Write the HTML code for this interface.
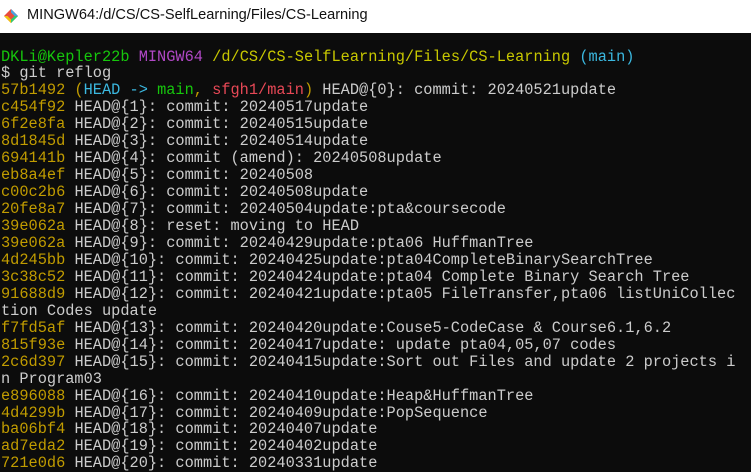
<!DOCTYPE html><html><head><style>
body{margin:0;width:751px;height:467px;overflow:hidden;background:#0c0c0c;}
.t{position:absolute;left:0;top:0;width:751px;height:33px;background:#fff;}
.t span{position:absolute;left:27px;top:7px;font:14.6px "Liberation Sans",sans-serif;color:#111;}
pre{position:absolute;left:1px;top:48.5px;margin:0;font:15.3px/16.95px "Liberation Mono",monospace;color:#cccccc;}
.g{color:#16c60c}.p{color:#b148c6}.y{color:#c19c00}.c{color:#3bb8e0}.r{color:#e74856}.yy{color:#c8c800}
</style></head><body>
<div class="t"><svg style="position:absolute;left:3px;top:8px" width="16" height="16" viewBox="0 0 16 16"><path d="M8 1L15 8L8 15L1 8Z" fill="#e84c3d"/><path d="M8 1L15 8L11.5 8L8 4.5Z" fill="#4aa3df"/><path d="M1 8L4.5 8L8 11.5L8 15Z" fill="#f1c40f"/><path d="M15 8L8 15L8 11.5L11.5 8Z" fill="#2ecc71"/></svg><span>MINGW64:/d/CS/CS-SelfLearning/Files/CS-Learning</span></div>
<pre><span class="g">DKLi@Kepler22b</span> <span class="p">MINGW64</span> <span class="yy">/d/CS/CS-SelfLearning/Files/CS-Learning</span> <span class="c">(main)</span>
$ git reflog
<span class="y">57b1492 (</span><span class="c">HEAD -&gt; </span><span class="g">main</span><span class="y">, </span><span class="r">sfgh1/main</span><span class="y">)</span> HEAD@{0}: commit: 20240521update
<span class="y">c454f92</span> HEAD@{1}: commit: 20240517update
<span class="y">6f2e8fa</span> HEAD@{2}: commit: 20240515update
<span class="y">8d1845d</span> HEAD@{3}: commit: 20240514update
<span class="y">694141b</span> HEAD@{4}: commit (amend): 20240508update
<span class="y">eb8a4ef</span> HEAD@{5}: commit: 20240508
<span class="y">c00c2b6</span> HEAD@{6}: commit: 20240508update
<span class="y">20fe8a7</span> HEAD@{7}: commit: 20240504update:pta&amp;coursecode
<span class="y">39e062a</span> HEAD@{8}: reset: moving to HEAD
<span class="y">39e062a</span> HEAD@{9}: commit: 20240429update:pta06 HuffmanTree
<span class="y">4d245bb</span> HEAD@{10}: commit: 20240425update:pta04CompleteBinarySearchTree
<span class="y">3c38c52</span> HEAD@{11}: commit: 20240424update:pta04 Complete Binary Search Tree
<span class="y">91688d9</span> HEAD@{12}: commit: 20240421update:pta05 FileTransfer,pta06 listUniCollec
tion Codes update
<span class="y">f7fd5af</span> HEAD@{13}: commit: 20240420update:Couse5-CodeCase &amp; Course6.1,6.2
<span class="y">815f93e</span> HEAD@{14}: commit: 20240417update: update pta04,05,07 codes
<span class="y">2c6d397</span> HEAD@{15}: commit: 20240415update:Sort out Files and update 2 projects i
n Program03
<span class="y">e896088</span> HEAD@{16}: commit: 20240410update:Heap&amp;HuffmanTree
<span class="y">4d4299b</span> HEAD@{17}: commit: 20240409update:PopSequence
<span class="y">ba06bf4</span> HEAD@{18}: commit: 20240407update
<span class="y">ad7eda2</span> HEAD@{19}: commit: 20240402update
<span class="y">721e0d6</span> HEAD@{20}: commit: 20240331update
</pre>
</body></html>
